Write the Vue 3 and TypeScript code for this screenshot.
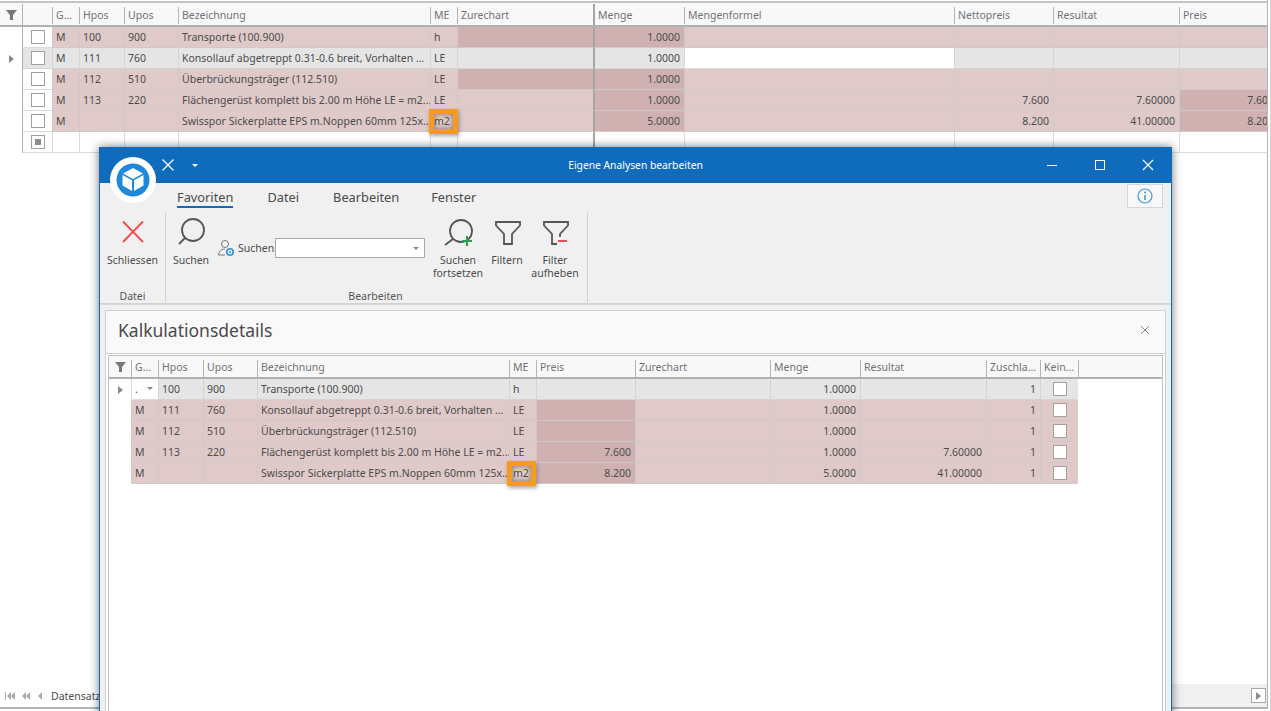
<script setup lang="ts">
interface Col {
  key: string
  label: string
  width: number
  right?: boolean
  check?: boolean
}

type Row = Record<string, string>

const outerCols: Col[] = [
  { key: 'sel', label: '', width: 30, check: true },
  { key: 'g', label: 'G...', width: 27 },
  { key: 'hpos', label: 'Hpos', width: 45 },
  { key: 'upos', label: 'Upos', width: 54 },
  { key: 'bez', label: 'Bezeichnung', width: 252 },
  { key: 'me', label: 'ME', width: 27 },
  { key: 'zur', label: 'Zurechart', width: 136 },
  { key: 'menge', label: 'Menge', width: 91, right: true },
  { key: 'formel', label: 'Mengenformel', width: 270 },
  { key: 'netto', label: 'Nettopreis', width: 99, right: true },
  { key: 'res', label: 'Resultat', width: 126, right: true },
  { key: 'preis', label: 'Preis', width: 99, right: true }
]

const innerCols: Col[] = [
  { key: 'g', label: 'G...', width: 27 },
  { key: 'hpos', label: 'Hpos', width: 45 },
  { key: 'upos', label: 'Upos', width: 54 },
  { key: 'bez', label: 'Bezeichnung', width: 252 },
  { key: 'me', label: 'ME', width: 27 },
  { key: 'preis', label: 'Preis', width: 99, right: true },
  { key: 'zur', label: 'Zurechart', width: 135 },
  { key: 'menge', label: 'Menge', width: 90, right: true },
  { key: 'res', label: 'Resultat', width: 126, right: true },
  { key: 'zuschlag', label: 'Zuschla...', width: 54, right: true },
  { key: 'kein', label: 'Kein...', width: 38, check: true }
]

const base = [
  { g: 'M', hpos: '100', upos: '900', bez: 'Transporte (100.900)', me: 'h', menge: '1.0000' },
  { g: 'M', hpos: '111', upos: '760', bez: 'Konsollauf abgetreppt 0.31-0.6 breit, Vorhalten ...', me: 'LE', menge: '1.0000' },
  { g: 'M', hpos: '112', upos: '510', bez: 'Überbrückungsträger (112.510)', me: 'LE', menge: '1.0000' },
  { g: 'M', hpos: '113', upos: '220', bez: 'Flächengerüst komplett bis 2.00 m Höhe LE = m2...', me: 'LE', menge: '1.0000', netto: '7.600', res: '7.60000', preis: '7.600' },
  { g: 'M', bez: 'Swisspor Sickerplatte EPS m.Noppen 60mm 125x...', me: 'm2', menge: '5.0000', netto: '8.200', res: '41.00000', preis: '8.200' }
] as Row[]

const innerRows: Row[] = base.map((r, i) => ({ ...r, zuschlag: '1', g: i === 0 ? '.' : 'M' }))

// dark cells per row, the rest of the row keeps the light tint
const outerDark = [['zur', 'menge'], [], ['zur', 'menge'], ['menge', 'preis'], ['menge', 'preis']]
const innerDark = [[], ['preis'], ['preis'], ['preis'], ['preis']]

const outerClass = (c: Col, i: number) => ({
  white: c.key === 'sel' && i !== 1 || (i === 1 && c.key === 'formel'),
  grey: i === 1 && c.key !== 'formel',
  pink: i !== 1 && c.key !== 'sel',
  dark: outerDark[i].includes(c.key),
  thick: c.key === 'menge',
  first: c.key === 'sel',
  check: c.check,
  right: c.right
})

const innerClass = (c: Col, i: number) => ({
  white: i === 0 && c.key === 'g',
  grey: i === 0 && c.key !== 'g',
  pink: i !== 0,
  dark: innerDark[i].includes(c.key),
  check: c.check,
  right: c.right
})

const tabs = ['Favoriten', 'Datei', 'Bearbeiten', 'Fenster']
</script>

<template>
  <div class="page">
    <section class="outer">
      <div class="grid">
        <div class="head">
          <div class="filter-cell">
            <svg width="11" height="10" viewBox="0 0 11 10"><path d="M0 0H11L7 5V10H4V5Z" fill="#777" /></svg>
          </div>
          <div v-for="c in outerCols" :key="c.key" class="hcell" :class="{ thick: c.key === 'menge', first: c.key === 'sel' }" :style="{ width: c.width + 'px' }">{{ c.label }}</div>
        </div>
        <div v-for="(r, i) in base" :key="i" class="row">
          <div class="indicator"><span v-if="i === 1" class="tri"></span></div>
          <div v-for="c in outerCols" :key="c.key" class="cell" :class="outerClass(c, i)" :style="{ width: c.width + 'px' }">
            <span v-if="c.check" class="box"></span>
            <template v-else>{{ r[c.key] }}</template>
            <span v-if="c.key === 'me' && r.me === 'm2'" class="mark"></span>
          </div>
        </div>
        <div class="row">
          <div class="indicator"></div>
          <div v-for="c in outerCols" :key="c.key" class="cell white" :class="{ thick: c.key === 'menge', first: c.key === 'sel', check: c.check }" :style="{ width: c.width + 'px' }">
            <span v-if="c.check" class="box new"><i></i></span>
          </div>
        </div>
      </div>

      <div class="pager">
        <div class="nav">
          <svg width="38" height="8" viewBox="0 0 38 8" fill="#aaa">
            <path d="M0 0H1V8H0ZM6 0V8L2 4ZM10 0V8L6 4ZM21 0V8L17 4ZM25 0V8L21 4ZM37 0V8L33 4Z" />
          </svg>
          <span>Datensatz</span>
        </div>
        <div class="track">
          <button class="scroll-btn"><span class="tri"></span></button>
        </div>
      </div>
    </section>

    <section class="window">
      <header class="titlebar">
        <div class="logo">
          <svg width="46" height="46" viewBox="0 0 46 46">
            <circle cx="23" cy="23" r="23" fill="#fff" />
            <circle cx="23" cy="23" r="16.5" fill="#1f88d9" />
            <path d="M23 11L33 16.5L23 22L13 16.5Z" fill="#fff" />
            <path d="M12.5 18L22 23.2V34L12.5 28.5Z" fill="#fff" />
            <path d="M33.5 18L24 23.2V34L33.5 28.5Z" fill="#fff" />
          </svg>
        </div>
        <div class="quick">
          <svg width="14" height="14" viewBox="0 0 14 14"><path d="M1.5 1.5L12.5 12.5M12.5 1.5L1.5 12.5" stroke="#fff" stroke-width="1.2" /></svg>
          <span class="quick-caret"></span>
        </div>
        <div class="title">Eigene Analysen bearbeiten</div>
        <div class="controls">
          <svg width="12" height="12" viewBox="0 0 12 12"><path d="M1 6.5H11" stroke="#fff" /></svg>
          <svg width="12" height="12" viewBox="0 0 12 12"><rect x="1.5" y="1.5" width="9" height="9" fill="none" stroke="#fff" /></svg>
          <svg width="12" height="12" viewBox="0 0 12 12"><path d="M1 1L11 11M11 1L1 11" stroke="#fff" stroke-width="1.2" /></svg>
        </div>
      </header>

      <div class="ribbon">
        <nav class="tabs">
          <span v-for="(t, i) in tabs" :key="t" class="tab" :class="{ on: i === 0 }">{{ t }}</span>
          <button class="info">
            <svg width="16" height="16" viewBox="0 0 16 16">
              <circle cx="8" cy="8" r="7" fill="none" stroke="#3d9bdc" stroke-width="1.2" />
              <path d="M8 7V12" stroke="#3d9bdc" stroke-width="1.6" />
              <circle cx="8" cy="4.6" r="1" fill="#3d9bdc" />
            </svg>
          </button>
        </nav>
        <div class="groups">
          <div class="group group-file">
            <div class="group-body">
              <button class="big w65">
                <svg width="30" height="30" viewBox="0 0 30 30"><path d="M5 4.5L25 25M25 4.5L5 25" stroke="#ee4d50" stroke-width="1.8" /></svg>
                <span>Schliessen</span>
              </button>
            </div>
            <div class="group-label">Datei</div>
          </div>
          <div class="group group-edit">
            <div class="group-body">
              <button class="big w36">
                <svg width="30" height="30" viewBox="0 0 30 30">
                  <circle cx="17" cy="13" r="11" fill="none" stroke="#555" stroke-width="1.8" />
                  <path d="M9 21L3 27" stroke="#555" stroke-width="1.8" />
                </svg>
                <span>Suchen</span>
              </button>
              <div class="search">
                <svg width="18" height="18" viewBox="0 0 18 18">
                  <circle cx="8" cy="5" r="3.5" fill="none" stroke="#777" />
                  <path d="M1.5 16C2 11.5 5 10 8 10" fill="none" stroke="#777" />
                  <path d="M1.5 16H8" stroke="#777" />
                  <circle cx="13" cy="13" r="3.2" fill="none" stroke="#2f8fd8" stroke-width="1.6" />
                  <circle cx="13" cy="13" r="1" fill="#2f8fd8" />
                </svg>
                <span class="search-label">Suchen</span>
                <div class="combo"><span class="combo-caret"></span></div>
              </div>
              <button class="big w50 next">
                <svg width="30" height="30" viewBox="0 0 30 30">
                  <circle cx="18" cy="14" r="11" fill="none" stroke="#555" stroke-width="1.8" />
                  <path d="M10 22L2 28" stroke="#555" stroke-width="1.8" />
                  <path d="M24 19V29M19 24H29" stroke="#2f9e52" stroke-width="2" />
                </svg>
                <span>Suchen<br />fortsetzen</span>
              </button>
              <button class="big w30">
                <svg width="30" height="30" viewBox="0 0 30 30">
                  <path d="M4 5H28V8.5L20 17V27H12V17L4 8.5Z" fill="none" stroke="#555" stroke-width="1.8" />
                </svg>
                <span>Filtern</span>
              </button>
              <button class="big w50">
                <svg width="30" height="30" viewBox="0 0 30 30">
                  <path d="M17 27H12V17L4 8.5V5H28V8.5L20 17V20" fill="none" stroke="#555" stroke-width="1.8" />
                  <path d="M18 24H27" stroke="#ee4d50" stroke-width="2" />
                </svg>
                <span>Filter<br />aufheben</span>
              </button>
            </div>
            <div class="group-label">Bearbeiten</div>
          </div>
        </div>
      </div>

      <div class="content">
        <div class="panel">
          <div class="panel-head">
            <h1>Kalkulationsdetails</h1>
            <svg width="10" height="10" viewBox="0 0 10 10"><path d="M1 1L9 9M9 1L1 9" stroke="#8a8a8a" /></svg>
          </div>
          <div class="grid inner">
            <div class="head">
              <div class="filter-cell">
                <svg width="11" height="10" viewBox="0 0 11 10"><path d="M0 0H11L7 5V10H4V5Z" fill="#777" /></svg>
              </div>
              <div v-for="c in innerCols" :key="c.key" class="hcell" :style="{ width: c.width + 'px' }">{{ c.label }}</div>
              <div class="hcell hend"></div>
            </div>
            <div v-for="(r, i) in innerRows" :key="i" class="row">
              <div class="indicator"><span v-if="i === 0" class="tri"></span></div>
              <div v-for="c in innerCols" :key="c.key" class="cell" :class="innerClass(c, i)" :style="{ width: c.width + 'px' }">
                <span v-if="c.check" class="box"></span>
                <template v-else>{{ r[c.key] }}</template>
                <span v-if="i === 0 && c.key === 'g'" class="cell-caret"></span>
                <span v-if="c.key === 'me' && r.me === 'm2'" class="mark"></span>
              </div>
            </div>
          </div>
        </div>
      </div>
    </section>
  </div>
</template>

<style>
body {
  margin: 0;
  background: #fff;
}
</style>

<style scoped>
* {
  box-sizing: border-box;
}

.page {
  position: relative;
  width: 1271px;
  height: 711px;
  overflow: hidden;
  background: #fff;
  font-family: "Noto Sans", "Liberation Sans", sans-serif;
  font-size: 10.5px;
  color: #4c4c4c;
  border-right: 1px solid #d4d4d4;
}

button {
  padding: 0;
  border: 0;
  background: none;
  font: inherit;
  color: inherit;
}

/* grid in the background */
.outer {
  display: flex;
  flex-direction: column;
  justify-content: space-between;
  width: 1268px;
  height: 709px;
  padding-top: 1px;
  border-right: 1px solid #b4b4b4;
  border-bottom: 2px solid #b4b4b4;
}

.grid {
  overflow: hidden;
  border-top: 2px solid #c4c4c4;
}

.head {
  display: flex;
  width: max-content;
  height: 24px;
  padding-top: 1px;
  background: #f8f8f8;
  border-bottom: 2px solid #b0b0b0;
}

.filter-cell {
  display: flex;
  flex: none;
  align-items: center;
  justify-content: center;
  width: 22px;
}

.hcell {
  flex: none;
  height: 17px;
  margin-top: 3px;
  padding-left: 3px;
  line-height: 17px;
  color: #6f7378;
  white-space: nowrap;
  border-left: 1px solid #b4b4b4;
}

.hcell.first {
  height: 21px;
  margin-top: 0;
}

.hcell.thick {
  height: 21px;
  margin-top: 0;
  padding-top: 3px;
  border-left: 2px solid #a6a6a6;
}

.row {
  display: flex;
  width: max-content;
  height: 21px;
}

.indicator {
  display: flex;
  flex: none;
  align-items: center;
  justify-content: center;
  width: 22px;
}

.tri {
  width: 0;
  height: 0;
  border-top: 4px solid transparent;
  border-bottom: 4px solid transparent;
  border-left: 5px solid #8a8a8a;
}

.cell {
  position: relative;
  display: flex;
  flex: none;
  align-items: center;
  height: 21px;
  padding: 0 4px 0 3px;
  white-space: nowrap;
  border-left: 1px solid #d2c8c8;
  border-bottom: 1px solid #d2c8c8;
}

.cell.check {
  padding: 0 3px;
}

.cell.right {
  justify-content: flex-end;
}

.cell.white {
  background: #fff;
  border-color: #dcdcdc;
}

.cell.grey {
  background: #e5e5e5;
  border-color: #d4d4d4;
}

.cell.pink {
  background: #dfc9c9;
}

.cell.dark {
  background: #cfb1b1;
}

.cell.thick {
  border-left: 2px solid #a6a6a6;
}

.cell.first {
  border-left-color: #b0b0b0;
}

.box {
  display: flex;
  align-items: center;
  justify-content: center;
  width: 14px;
  height: 14px;
  margin: 0 auto;
  background: #fff;
  border: 1px solid #a0a0a0;
}

.box.new i {
  display: block;
  width: 6px;
  height: 6px;
  background: #8c8c8c;
}

.mark {
  position: absolute;
  top: -2px;
  left: -2px;
  z-index: 2;
  width: 29px;
  height: 25px;
  border: 5px solid #f89b1d;
  box-shadow: 1px 2px 4px rgba(0, 0, 0, 0.35), inset 0 0 5px rgba(0, 0, 0, 0.45);
}

.inner .mark {
  left: -3px;
}

.pager {
  display: flex;
  height: 23px;
}

.nav {
  display: flex;
  flex: none;
  align-items: center;
  gap: 8px;
  width: 400px;
  padding-left: 5px;
  padding-top: 1px;
}

.track {
  display: flex;
  flex: 1;
  align-items: center;
  justify-content: flex-end;
  padding-right: 1px;
  background: #f0f0f0;
}

.scroll-btn {
  display: flex;
  align-items: center;
  justify-content: center;
  width: 15px;
  height: 15px;
  background: #fff;
  border: 1px solid #a8a8a8;
}

/* floating window */
.window {
  position: absolute;
  top: 147px;
  left: 99px;
  z-index: 3;
  width: 1073px;
  height: 580px;
  background: #f0f0f0;
  border-left: 1px solid #0f6cbd;
  border-right: 1px solid #0f6cbd;
  box-shadow: 0 0 9px rgba(0, 0, 0, 0.55);
}

.titlebar {
  position: relative;
  display: grid;
  grid-template-columns: 1fr auto 1fr;
  align-items: center;
  height: 36px;
  background: #0f6cbd;
  color: #fff;
}

.logo {
  position: absolute;
  top: 10px;
  left: 10px;
  z-index: 1;
  display: flex;
}

.quick {
  display: flex;
  align-items: center;
  gap: 17px;
  padding-left: 61px;
}

.quick-caret {
  width: 0;
  height: 0;
  border-top: 3px solid #fff;
  border-right: 3px solid transparent;
  border-left: 3px solid transparent;
}

.title {
  font-size: 10.3px;
}

.controls {
  display: flex;
  gap: 36px;
  justify-content: flex-end;
  padding-right: 17px;
}

.ribbon {
  height: 121px;
  background: #f0f0f0;
  border-bottom: 1px solid #d2d2d2;
}

.tabs {
  position: relative;
  display: flex;
  gap: 34px;
  height: 29px;
  padding: 6px 0 0 77px;
}

.tab {
  height: 19px;
  font-size: 12.8px;
  line-height: 16px;
  color: #4a4a4a;
}

.tab:nth-child(4) {
  margin-left: -2px;
}

.tab.on {
  border-bottom: 2px solid #0f6cbd;
}

.info {
  position: absolute;
  top: 1px;
  right: 8px;
  display: flex;
  align-items: center;
  justify-content: center;
  width: 36px;
  height: 24px;
  background: #f8f8f8;
  border: 1px solid #d6d6d6;
}

.groups {
  display: flex;
  height: 90px;
}

.group {
  display: flex;
  flex-direction: column;
  border-right: 1px solid #d2d2d2;
}

.group-file {
  width: 66px;
}

.group-edit {
  width: 422px;
  padding-left: 7px;
}

.group-edit .group-label {
  margin-left: -9px;
}

.group-body {
  display: flex;
  flex: 1;
  align-items: flex-start;
  padding-top: 5px;
}

.group-label {
  height: 12px;
  line-height: 12px;
  text-align: center;
  color: #555;
}

.big {
  display: flex;
  flex: none;
  flex-direction: column;
  align-items: center;
  gap: 7px;
  line-height: 13px;
  color: #4c4c4c;
}

.w65 {
  width: 65px;
}

.w36 {
  width: 36px;
}

.w50 {
  width: 50px;
}

.w30 {
  width: 30px;
  margin: 0 8px 0 9px;
}

.search {
  display: flex;
  flex: none;
  align-items: center;
  width: 208px;
  height: 20px;
  margin: 21px 8px 0 8px;
}

.search-label {
  flex: 1;
  margin-left: 3px;
}

.combo {
  position: relative;
  flex: none;
  width: 150px;
  height: 20px;
  background: #fff;
  border: 1px solid #a8a8a8;
}

.combo-caret,
.cell-caret {
  position: absolute;
  top: 8px;
  right: 5px;
  width: 0;
  height: 0;
  border-top: 3px solid #888;
  border-right: 3px solid transparent;
  border-left: 3px solid transparent;
}

.content {
  height: 420px;
  padding: 5px 5px 0;
  border-top: 1px solid #d8d8d8;
}

.panel {
  height: 100%;
  background: #fff;
  border: 1px solid #cfcfcf;
}

.panel-head {
  display: flex;
  align-items: center;
  justify-content: space-between;
  height: 43px;
  padding: 0 15px 4px 12px;
  background: #f9f9f9;
  border-bottom: 1px solid #cfcfcf;
}

h1 {
  margin: 0;
  font-size: 17.5px;
  font-weight: 400;
  color: #4a4a4a;
}

.inner {
  height: 380px;
  margin: 1px 2px 0;
  border: 1px solid #c0c0c0;
}

.inner .head {
  width: 100%;
  height: 23px;
}

.inner .hcell {
  line-height: 15px;
}

.hend {
  flex: 1;
}
</style>
